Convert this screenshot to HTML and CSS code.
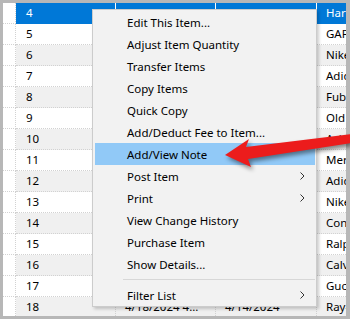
FILE: index.html
```html
<!DOCTYPE html>
<html lang="en">
<head>
    <meta charset="UTF-8">
    <meta name="viewport" content="width=device-width, initial-scale=1.0">
    <title>Inventory</title>
    <link rel="stylesheet" href="styles.css">
</head>
<body>
    <div class="frame">
        <div class="grid">
            <div class="row sel"><div class="cell head"></div><div class="cell num">4</div><div class="cell"></div><div class="cell"></div><div class="cell last">Harley-Davidson</div></div>
            <div class="row"><div class="cell head"></div><div class="cell num">5</div><div class="cell"></div><div class="cell"></div><div class="cell last">GAP</div></div>
            <div class="row"><div class="cell head"></div><div class="cell num">6</div><div class="cell"></div><div class="cell"></div><div class="cell last">Nike</div></div>
            <div class="row"><div class="cell head"></div><div class="cell num">7</div><div class="cell"></div><div class="cell"></div><div class="cell last">Adidas</div></div>
            <div class="row"><div class="cell head"></div><div class="cell num">8</div><div class="cell"></div><div class="cell"></div><div class="cell last">Fubu</div></div>
            <div class="row"><div class="cell head"></div><div class="cell num">9</div><div class="cell"></div><div class="cell"></div><div class="cell last">Old Navy</div></div>
            <div class="row"><div class="cell head"></div><div class="cell num">10</div><div class="cell"></div><div class="cell"></div><div class="cell last">Asics</div></div>
            <div class="row"><div class="cell head"></div><div class="cell num">11</div><div class="cell"></div><div class="cell"></div><div class="cell last">Merrell</div></div>
            <div class="row"><div class="cell head"></div><div class="cell num">12</div><div class="cell"></div><div class="cell"></div><div class="cell last">Adidas</div></div>
            <div class="row"><div class="cell head"></div><div class="cell num">13</div><div class="cell"></div><div class="cell"></div><div class="cell last">Nike</div></div>
            <div class="row"><div class="cell head"></div><div class="cell num">14</div><div class="cell"></div><div class="cell"></div><div class="cell last">Converse</div></div>
            <div class="row"><div class="cell head"></div><div class="cell num">15</div><div class="cell"></div><div class="cell"></div><div class="cell last">Ralph Lauren</div></div>
            <div class="row"><div class="cell head"></div><div class="cell num">16</div><div class="cell"></div><div class="cell"></div><div class="cell last">Calvin Klein</div></div>
            <div class="row"><div class="cell head"></div><div class="cell num">17</div><div class="cell"></div><div class="cell"></div><div class="cell last">Gucci</div></div>
            <div class="row"><div class="cell head"></div><div class="cell num">18</div><div class="cell">4/18/2024 4...</div><div class="cell">4/14/2024</div><div class="cell last">Ray-Ban</div></div>
        </div>

        <ul class="menu">
            <li class="item">Edit This Item...</li>
            <li class="item">Adjust Item Quantity</li>
            <li class="item">Transfer Items</li>
            <li class="item">Copy Items</li>
            <li class="item">Quick Copy</li>
            <li class="item">Add/Deduct Fee to Item...</li>
            <li class="item hot">Add/View Note</li>
            <li class="item">Post Item <svg class="chev" width="5" height="8" viewBox="0 0 5 8"><path d="M0.5 0.5 L4 4 L0.5 7.5" fill="none" stroke="#333" stroke-width="1"/></svg></li>
            <li class="item">Print <svg class="chev" width="5" height="8" viewBox="0 0 5 8"><path d="M0.5 0.5 L4 4 L0.5 7.5" fill="none" stroke="#333" stroke-width="1"/></svg></li>
            <li class="item">View Change History</li>
            <li class="item">Purchase Item</li>
            <li class="item">Show Details...</li>
            <li class="sep"></li>
            <li class="item">Filter List <svg class="chev" width="5" height="8" viewBox="0 0 5 8"><path d="M0.5 0.5 L4 4 L0.5 7.5" fill="none" stroke="#333" stroke-width="1"/></svg></li>
        </ul>

        <!-- callout arrow drawn over the screenshot -->
        <svg class="callout" width="350" height="319" viewBox="0 0 350 319">
            <polygon points="225,155 249,139 246,147 352,134 352,143 248,159 251,167" fill="#ec1c1c"/>
        </svg>
    </div>
</body>
</html>
```

FILE: styles.css
```css
body {
    margin: 0;
    padding: 0;
    font-family: 'Noto Sans', 'Open Sans', sans-serif;
    font-size: 11.5px;
    color: #000;
}

.frame {
    position: relative;
    width: 350px;
    height: 319px;
    box-sizing: border-box;
    padding: 3px 4px 3px 3px;
    background: #b7b7b7;
    overflow: hidden;
}

.grid {
    height: 100%;
    background: #fff;
    overflow: hidden;
}

.row {
    display: grid;
    grid-template-columns: 13px 100px 100px 101px 1fr;
    height: 21px;
}

.cell {
    box-sizing: border-box;
    border-right: 1px dotted #d2d2d2;
    border-bottom: 1px dotted #d2d2d2;
    padding-left: 9px;
    line-height: 20px;
    white-space: nowrap;
    overflow: hidden;
}

.cell.head {
    padding: 0;
}

.cell.num {
    padding-left: 10px;
}

.cell.last {
    border-right: none;
}

.row:nth-child(even) .cell {
    background: #fff;
}

.row:nth-child(odd) .cell {
    background: #f0f0f0;
}

.row .cell.head {
    background: #fff;
}

.row.sel .cell {
    background: #0078d7;
    color: #fff;
    border-right: 1px solid #fff;
    border-bottom-color: #0078d7;
}

.row.sel .cell.head {
    background: #fff;
    border-right: 1px dotted #d2d2d2;
    border-bottom: 1px dotted #d2d2d2;
}

.row.sel .cell.last {
    border-right: none;
}

.menu {
    position: absolute;
    left: 92px;
    top: 9px;
    width: 225px;
    box-sizing: border-box;
    margin: 0;
    padding: 1px 0 0;
    list-style: none;
    background: #f2f2f2;
    border: 1px solid #cccccc;
    box-shadow: 2px 2px 3px rgba(0, 0, 0, 0.2);
}

.item {
    height: 22px;
    margin: 0 1px 0 2px;
    padding: 0 10px 0 32px;
    display: flex;
    align-items: center;
    justify-content: space-between;
}

.item.hot {
    background: #91c9f7;
}

.sep {
    height: 1px;
    margin: 4px 1px 4px 30px;
    background: #d7d7d7;
}

.callout {
    position: absolute;
    left: 0;
    top: 0;
    pointer-events: none;
    filter: drop-shadow(2px 3px 2px rgba(0, 0, 0, 0.45));
}
```
